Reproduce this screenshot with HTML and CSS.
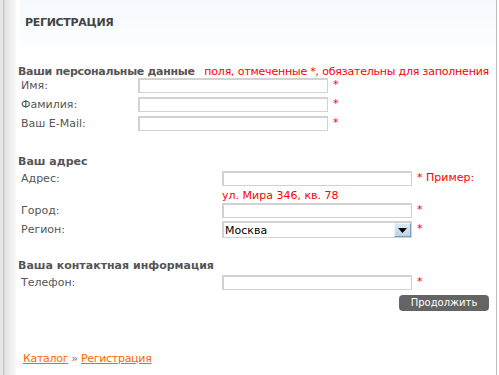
FILE: index.html
```html
<!DOCTYPE html>
<html lang="ru">
<head>
    <meta charset="UTF-8">
    <title>Регистрация</title>
    <link rel="stylesheet" href="styles.css">
</head>
<body>
    <div class="page">
        <div class="shade"></div>
        <div class="content">
            <!-- Header -->
            <div class="head">
                <h1>РЕГИСТРАЦИЯ</h1>
            </div>

            <form class="reg-form">
                <!-- Personal data -->
                <div class="section-title first">
                    <h2>Ваши персональные данные</h2>
                    <span class="note">поля, отмеченные *, обязательны для заполнения</span>
                </div>
                <div class="grid narrow">
                    <label for="fname">Имя:</label>
                    <input type="text" id="fname">
                    <span class="req">*</span>

                    <label for="lname">Фамилия:</label>
                    <input type="text" id="lname">
                    <span class="req">*</span>

                    <label for="email">Ваш E-Mail:</label>
                    <input type="text" id="email">
                    <span class="req">*</span>
                </div>

                <!-- Address -->
                <div class="section-title">
                    <h2>Ваш адрес</h2>
                </div>
                <div class="grid wide">
                    <label for="address">Адрес:</label>
                    <input type="text" id="address">
                    <span class="req">* Пример:</span>

                    <span></span>
                    <span class="example">ул. Мира 346, кв. 78</span>

                    <label for="city">Город:</label>
                    <input type="text" id="city">
                    <span class="req">*</span>

                    <label for="region">Регион:</label>
                    <div class="select">
                        <select id="region">
                            <option>Москва</option>
                        </select>
                        <span class="arrow">
                            <svg width="9" height="5" viewBox="0 0 9 5"><path d="M0 0H9L4.5 5Z" fill="#000"/></svg>
                        </span>
                    </div>
                    <span class="req">*</span>
                </div>

                <!-- Contact -->
                <div class="section-title third">
                    <h2>Ваша контактная информация</h2>
                </div>
                <div class="grid wide">
                    <label for="phone">Телефон:</label>
                    <input type="text" id="phone">
                    <span class="req">*</span>
                </div>

                <div class="actions">
                    <button type="submit">Продолжить</button>
                </div>
            </form>

            <!-- Breadcrumbs -->
            <div class="crumbs">
                <a href="#">Каталог</a> <span class="sep">&raquo;</span> <a href="#">Регистрация</a>
            </div>
        </div>
    </div>
</body>
</html>
```

FILE: styles.css
```css
/* Base */
* {
    margin: 0;
    padding: 0;
    box-sizing: border-box;
}

body {
    background: #fff;
    font-family: "DejaVu Sans", Verdana, sans-serif;
    font-size: 11px;
    color: #555;
}

.page {
    display: flex;
    width: 499px;
    height: 375px;
}

/* Left shadow strip */
.shade {
    width: 16px;
    flex-shrink: 0;
    border-left: 3px solid #e6e6e6;
    background: linear-gradient(to right, #c8c8c8 0, #c8c8c8 1px, #e2e2e2 2px, #fff 16px);
}

.content {
    width: 481px;
    border-right: 1px solid #bdbdbd;
    display: flex;
    flex-direction: column;
}

/* Header */
.head {
    height: 55px;
    margin-left: 4px;
    padding: 16px 0 0 5px;
    background: linear-gradient(#f5f9fd, #fbfdfe 70%, #fff);
}

h1 {
    font-size: 11px;
    font-weight: bold;
    color: #444;
    line-height: 14px;
    letter-spacing: -0.3px;
}

/* Form */
.reg-form {
    padding: 0 7px 0 2px;
}

.section-title {
    display: flex;
    justify-content: space-between;
    align-items: baseline;
    height: 16px;
    margin-top: 20px;
    line-height: 16px;
}

.section-title.first {
    margin-top: 12px;
    height: 10px;
    line-height: 10px;
}

.section-title.third {
    margin-top: 18px;
}

h2 {
    font-size: 11px;
    font-weight: bold;
    color: #555;
}

.first h2 {
    letter-spacing: -0.3px;
}

.note {
    color: #f00;
    letter-spacing: -0.2px;
}

.grid {
    display: grid;
    align-items: start;
    padding-left: 3px;
}

.grid.narrow {
    grid-template-columns: 117px 190px auto;
}

.grid.wide {
    grid-template-columns: 201px 190px auto;
}

.grid label {
    line-height: 17px;
    height: 19px;
}

.grid input {
    width: 190px;
    height: 15px;
    margin-top: 1px;
    border: 2px solid #d2d2d2;
    border-width: 2px 1px 1px 2px;
    outline: none;
    font: inherit;
}

.req {
    color: #f00;
    margin-left: 5px;
    line-height: 15px;
}

.example {
    color: #f00;
    line-height: 13px;
    height: 13px;
    grid-column: 2 / span 2;
}

.select {
    display: flex;
    width: 190px;
    height: 17px;
    border: 2px solid #d2d2d2;
    border-width: 2px 1px 1px 2px;
    background: #fff;
}

.select select {
    flex: 1;
    appearance: none;
    border: none;
    background: none;
    outline: none;
    font-family: "DejaVu Sans", Verdana, sans-serif;
    font-size: 11px;
    color: #000;
    padding-left: 1px;
}

.arrow {
    width: 17px;
    display: flex;
    align-items: center;
    justify-content: center;
    background: linear-gradient(#dde9f6, #bcd3ea);
    border: 1px solid #eef4fa;
    border-right-color: #7f9db9;
    border-bottom-color: #7f9db9;
}

.actions {
    display: flex;
    justify-content: flex-end;
    padding-top: 2px;
}

button {
    width: 90px;
    height: 16px;
    border: none;
    border-radius: 4px;
    background: #646464;
    color: #fff;
    font-family: "DejaVu Sans", Verdana, sans-serif;
    font-size: 10px;
    line-height: 16px;
    cursor: pointer;
}

/* Breadcrumbs */
.crumbs {
    margin-top: auto;
    padding: 0 0 10px 7px;
    letter-spacing: -0.3px;
    color: #777;
}

.crumbs a {
    color: #f60;
}
```
